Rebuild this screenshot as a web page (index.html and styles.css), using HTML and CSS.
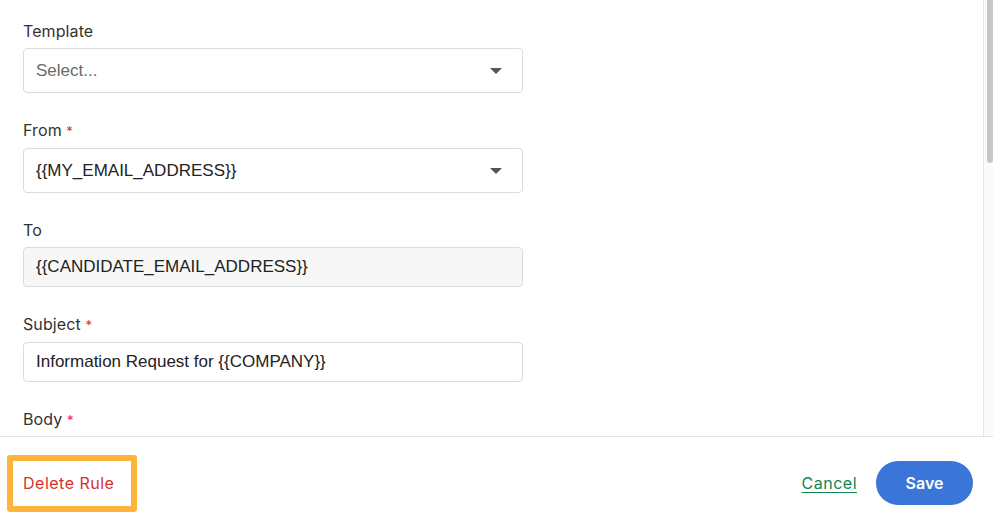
FILE: index.html
```html
<!DOCTYPE html>
<html>
<head>
<meta charset="utf-8">
<link rel="stylesheet" href="styles.css">
</head>
<body>
<div class="page">
  <div class="content">
    <div class="form">
      <div class="field">
        <div class="label">Template</div>
        <div class="select"><span class="placeholder">Select...</span><span class="caret"></span></div>
      </div>
      <div class="field">
        <div class="label">From <span class="req">*</span></div>
        <div class="select"><span class="value">{{MY_EMAIL_ADDRESS}}</span><span class="caret"></span></div>
      </div>
      <div class="field">
        <div class="label">To</div>
        <div class="input disabled"><span class="value">{{CANDIDATE_EMAIL_ADDRESS}}</span></div>
      </div>
      <div class="field">
        <div class="label">Subject <span class="req">*</span></div>
        <div class="input"><span class="value">Information Request for {{COMPANY}}</span></div>
      </div>
      <div class="field">
        <div class="label">Body <span class="req">*</span></div>
      </div>
    </div>
    <div class="scrollbar"><div class="thumb"></div></div>
  </div>
  <div class="footer">
    <button class="delete">Delete Rule</button>
    <div class="actions">
      <a class="cancel" href="#">Cancel</a>
      <button class="save">Save</button>
    </div>
  </div>
</div>
</body>
</html>
```

FILE: styles.css
```css
* { box-sizing: border-box; }
html, body { margin: 0; padding: 0; background: #fff; }
body { font-family: Inter, "Noto Sans", sans-serif; color: #333; }
.page { width: 993px; height: 523px; display: flex; flex-direction: column; overflow: hidden; }
.content { height: 437px; display: flex; border-bottom: 1px solid #e3e3e3; overflow: hidden; }
.form { flex: 1; padding: 20px 0 0 23px; }
.field { width: 500px; margin-bottom: 26px; }
.label { font-size: 16px; line-height: 22px; margin-bottom: 6px; color: #333; letter-spacing: 0.1px; }
.req { color: #d9342b; font-size: 13px; }
.select, .input { border: 1px solid #dcdcdc; border-radius: 4px; display: flex; align-items: center; padding: 0 12px; font-family: "Liberation Sans", Arial, sans-serif; font-size: 17px; }
.select { height: 45px; justify-content: space-between; }
.input { height: 40px; }
.input.disabled { background: #f7f7f7; }
.placeholder { color: #6b6b6b; }
.value { color: #222; }
.caret { width: 0; height: 0; border-left: 6px solid transparent; border-right: 6px solid transparent; border-top: 6px solid #555; margin-right: 8px; }
.scrollbar { width: 10px; border-left: 1px solid #e6e6e6; background: #fafafa; position: relative; }
.thumb { position: absolute; top: 0; right: 0; width: 6px; height: 163px; background: #c6c6c6; border-radius: 0 0 3px 3px; }
.footer { flex: 1; display: flex; align-items: center; justify-content: space-between; padding: 6px 20px 0 7px; }
.delete { width: 130px; height: 57px; border: 6px solid #fdb43d; border-radius: 3px; background: #fff; color: #d3322b; font-family: Inter, "Noto Sans", sans-serif; font-size: 16px; letter-spacing: 0.5px; text-align: left; padding: 0 0 0 10px; }
.actions { display: flex; align-items: center; gap: 19px; }
.cancel { color: #0f8653; font-size: 16px; letter-spacing: 0.5px; text-decoration: underline; text-underline-offset: 3px; }
.save { width: 97px; height: 44px; border: none; border-radius: 22px; background: #3a76d7; color: #fff; font-family: Inter, "Noto Sans", sans-serif; font-size: 16px; font-weight: 600; }
```
